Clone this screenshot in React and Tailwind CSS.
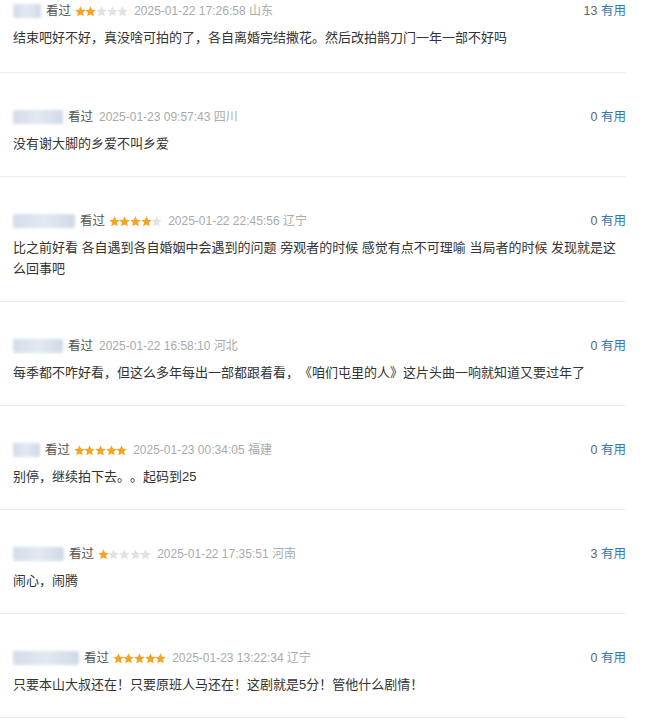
const comments = [
  {
    nameW: 28,
    rating: 2,
    time: "2025-01-22 17:26:58",
    place: "山东",
    votes: 13,
    text: "结束吧好不好，真没啥可拍的了，各自离婚完结撒花。然后改拍鹊刀门一年一部不好吗",
  },
  {
    nameW: 50,
    rating: 0,
    time: "2025-01-23 09:57:43",
    place: "四川",
    votes: 0,
    text: "没有谢大脚的乡爱不叫乡爱",
  },
  {
    nameW: 62,
    rating: 4,
    time: "2025-01-22 22:45:56",
    place: "辽宁",
    votes: 0,
    text: "比之前好看 各自遇到各自婚姻中会遇到的问题 旁观者的时候 感觉有点不可理喻 当局者的时候 发现就是这么回事吧",
  },
  {
    nameW: 50,
    rating: 0,
    time: "2025-01-22 16:58:10",
    place: "河北",
    votes: 0,
    text: "每季都不咋好看，但这么多年每出一部都跟着看，《咱们屯里的人》这片头曲一响就知道又要过年了",
  },
  {
    nameW: 27,
    rating: 5,
    time: "2025-01-23 00:34:05",
    place: "福建",
    votes: 0,
    text: "别停，继续拍下去。。起码到25",
  },
  {
    nameW: 51,
    rating: 1,
    time: "2025-01-22 17:35:51",
    place: "河南",
    votes: 3,
    text: "闹心，闹腾",
  },
  {
    nameW: 66,
    rating: 5,
    time: "2025-01-23 13:22:34",
    place: "辽宁",
    votes: 0,
    text: "只要本山大叔还在！只要原班人马还在！这剧就是5分！管他什么剧情！",
  },
];

function Star({ on }) {
  return (
    <svg viewBox="0 0 24 24" className="w-[11px] h-[11px] -mx-[0.2px] shrink-0">
      <path
        d="M12 0.5l3.4 7.6 8.3.8-6.3 5.5 1.9 8.2L12 18.3l-7.3 4.3 1.9-8.2L0.3 8.9l8.3-.8z"
        fill={on ? "#f7a325" : "#e2e2e2"}
      />
    </svg>
  );
}

function Stars({ n }) {
  return (
    <span className="flex items-center ml-[4px]">
      {[1, 2, 3, 4, 5].map((i) => (
        <Star key={i} on={i <= n} />
      ))}
    </span>
  );
}

function Comment({ c, first }) {
  return (
    <div
      className={`border-b border-[#ededed] pl-[13px] ${
        first ? "pt-[1px] pb-[24px]" : "pt-[34px] pb-[22px]"
      }`}
    >
      <div className="flex items-center justify-between h-[20px]">
        <div className="flex items-center">
          {/* blurred user name */}
          <span
            className="h-[14px] rounded-[2px] blur-[1.5px] bg-gradient-to-r from-[#d3dcea] via-[#e3e9f1] to-[#cfd9e7]"
            style={{ width: c.nameW }}
          />
          <span className="ml-[5px] text-[12.5px] text-[#555]">看过</span>
          {c.rating > 0 && <Stars n={c.rating} />}
          <span className="ml-[6px] text-[12px] text-[#aaa]">
            {c.time} {c.place}
          </span>
        </div>
        <div className="text-[12.5px] text-[#666]">
          {c.votes} <span className="text-[#3377aa]">有用</span>
        </div>
      </div>
      <p className="mt-[6px] text-[13px] leading-[21px] text-[#333] [text-spacing-trim:space-all]">
        {c.text}
      </p>
    </div>
  );
}

export default function App() {
  return (
    <div
      className="w-[649px] h-[720px] overflow-hidden bg-white"
      style={{ fontFamily: '"Liberation Sans", "Noto Sans CJK SC", sans-serif' }}
    >
      <div className="w-[626px]">
        {comments.map((c, i) => (
          <Comment key={i} c={c} first={i === 0} />
        ))}
      </div>
    </div>
  );
}
